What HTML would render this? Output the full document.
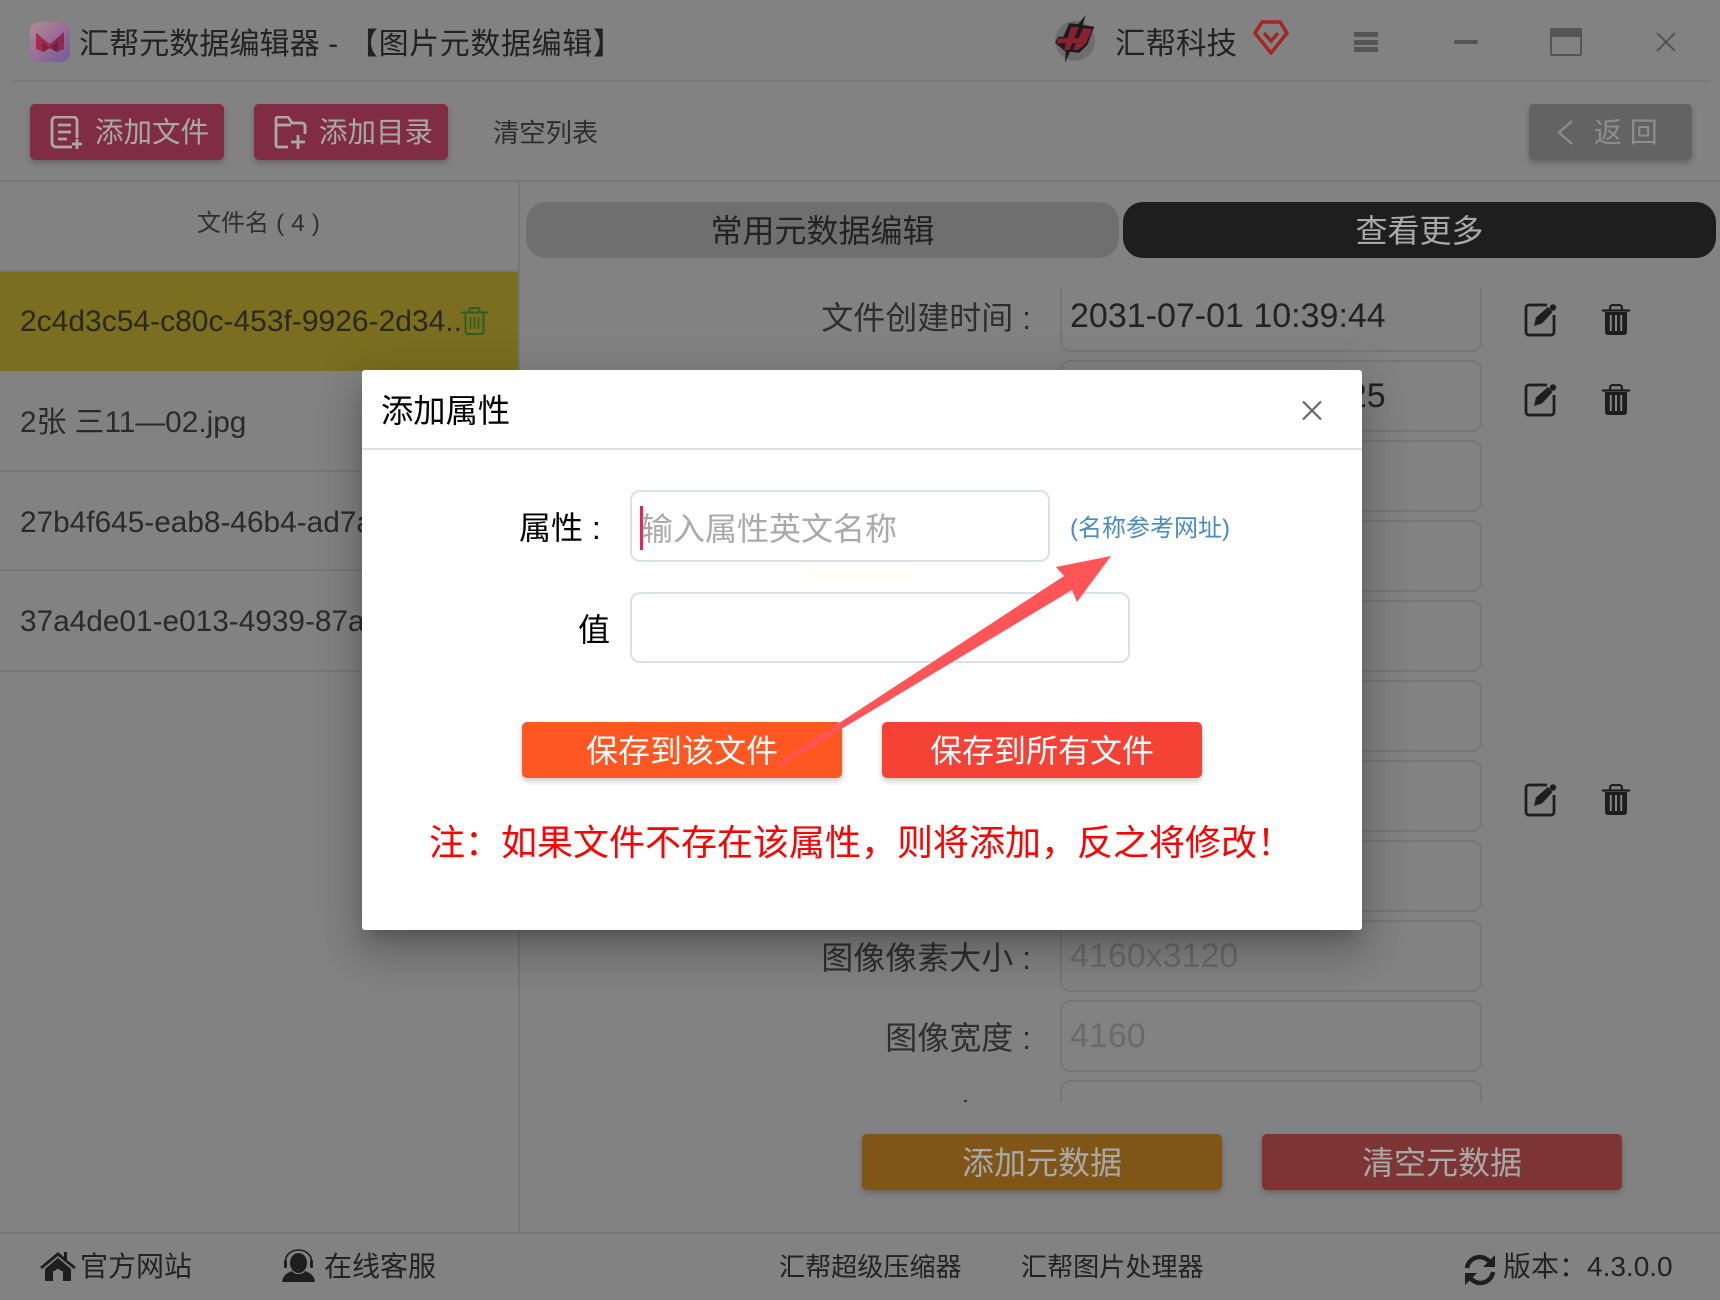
<!DOCTYPE html>
<html lang="zh-CN"><head><meta charset="utf-8"><title>汇帮元数据编辑器</title>
<style>
*{box-sizing:border-box;margin:0;padding:0}
html,body{width:1720px;height:1300px;overflow:hidden;background:#828282}
body{position:relative;font-family:"Liberation Sans","Noto Sans CJK SC",sans-serif;color:#222}
.a,.t{position:absolute}
.t{white-space:pre}
.line{position:absolute;background:#767676}
.btn{position:absolute;border-radius:5px;box-shadow:0 3px 6px rgba(0,0,0,.22)}
.row{position:absolute;left:0;width:518px;height:100px;border-bottom:2px solid #767676;padding-left:20px;font-size:30px;line-height:102px;color:#2a2a2a;white-space:nowrap;overflow:hidden}
.inp{position:absolute;left:533px;width:422px;height:72px;border:2px solid #767676;border-radius:10px;font-size:34px;line-height:68px;padding-left:7px;color:#222}
.lab{position:absolute;left:200px;width:304px;text-align:right;font-size:32px;line-height:76px;color:#2e2e2e;white-space:pre}
.mi{position:absolute;border:2px solid #dcdfe6;border-radius:10px;background:#fff}
</style></head><body>

<!-- title bar -->
<svg class="a" style="left:30px;top:22px" width="40" height="40" viewBox="0 0 40 40">
<defs><linearGradient id="g" x1="0" y1="0" x2="1" y2="1"><stop offset="0" stop-color="#b08c8c"/><stop offset=".5" stop-color="#9a6d98"/><stop offset="1" stop-color="#6f5c98"/></linearGradient></defs>
<rect width="40" height="40" rx="9" fill="url(#g)"/>
<path d="M6 11 L20 22 L20 26 L13 30 L6 27Z" fill="#a52a50"/><path d="M34 10 L20 22 L20 26 L27 30 L34 27Z" fill="#8c2a52"/><path d="M12 19 L20 26 L13 30Z" fill="#7c2244"/><path d="M28 19 L20 26 L27 30Z" fill="#701f44"/></svg>
<div class="t" style="left:79px;top:22px;font-size:30.100px;line-height:46px;color:#222">汇帮元数据编辑器 -</div>
<div class="t" style="left:348px;top:22px;font-size:30px;line-height:46px;color:#222;letter-spacing:.6px">【图片元数据编辑】</div>

<svg class="a" style="left:1053px;top:13px" width="46" height="52" viewBox="0 0 46 52">
<circle cx="22" cy="27.700" r="20" fill="#6d6d6d"/>
<path d="M32.700 2 L29.700 12 L41.300 13.700 L34.300 32 L26.300 39.700 L17 38.700 L12 49.700 L12.700 38.700 L2 29.700 L5.300 23.700 L10.300 23.700 L16.300 10.300 L25.300 11Z" fill="#1c1c1c"/>
<path d="M18 14 H26 L16.300 37 H11Z" fill="#8a2032"/><path d="M30.300 15.300 L39.700 16 L33 30 L25.300 37 H19.700Z" fill="#8a2032"/><path d="M5.300 25.300 H34.300 L32 30.300 H3.700Z" fill="#8a2032"/></svg>
<div class="t" style="left:1115px;top:21px;font-size:30.500px;line-height:46px;color:#222">汇帮科技</div>
<svg class="a" style="left:1253px;top:20px" width="36" height="35" viewBox="0 0 36 35"><path d="M9 2 H27 L34 13 L18 33 L2 13Z" fill="none" stroke="#a32626" stroke-width="3.500" stroke-linejoin="round"/><path d="M11 13 L18 21 L25 13" fill="none" stroke="#a32626" stroke-width="3.500"/></svg>

<div class="a" style="left:1354px;top:32px;width:24px;height:5px;background:#555"></div>
<div class="a" style="left:1354px;top:40px;width:24px;height:5px;background:#555"></div>
<div class="a" style="left:1354px;top:47px;width:24px;height:5px;background:#555"></div>
<div class="a" style="left:1454px;top:40px;width:24px;height:4px;border-radius:2px;background:#555"></div>
<div class="a" style="left:1550px;top:28px;width:32px;height:28px;border:2px solid #555;border-top:9px solid #555;border-radius:2px"></div>
<svg class="a" style="left:1655px;top:32px" width="22" height="20" viewBox="0 0 22 20"><path d="M2 1 L20 19 M20 1 L2 19" stroke="#555" stroke-width="2.200"/></svg>

<div class="line" style="left:12px;top:80px;width:1698px;height:2px;background:#787878"></div>

<!-- toolbar -->
<div class="btn" style="left:30px;top:104px;width:194px;height:56px;background:#802c44"></div>
<svg class="a" style="left:50px;top:116px" width="33" height="33" viewBox="0 0 33 33" fill="none" stroke="#a9a9a9" stroke-width="2.800"><path d="M22 31 H6 a4 4 0 0 1-4-4 V5 a4 4 0 0 1 4-4 H23 a4 4 0 0 1 4 4 V22"/><path d="M8 9 H21 M8 16 H21 M8 23 H17"/><path d="M22 28 H32 M27 23 V33"/></svg>
<div class="t" style="left:95px;top:110px;font-size:28.500px;line-height:46px;color:#a9a9a9">添加文件</div>

<div class="btn" style="left:254px;top:104px;width:194px;height:56px;background:#802c44"></div>
<svg class="a" style="left:274px;top:116px" width="33" height="33" viewBox="0 0 33 33" fill="none" stroke="#a9a9a9" stroke-width="2.800"><path d="M14 31 H4 a2 2 0 0 1-2-2 V3 a2 2 0 0 1 2-2 H14 L18 7 H28 a3 3 0 0 1 3 3 V18"/><path d="M2 9 H17"/><path d="M17 26 H31 M24 19 V33"/></svg>
<div class="t" style="left:319px;top:110px;font-size:28.500px;line-height:46px;color:#a9a9a9">添加目录</div>

<div class="t" style="left:493px;top:110px;font-size:26.300px;line-height:46px;color:#2e2e2e">清空列表</div>

<div class="btn" style="left:1529px;top:104px;width:163px;height:56px;background:#636363"></div>
<svg class="a" style="left:1555px;top:119px" width="20" height="27" viewBox="0 0 20 27"><path d="M17 2 L4 13.500 L17 25" fill="none" stroke="#8a8a8a" stroke-width="2.400"/></svg>
<div class="t" style="left:1594px;top:110px;font-size:28px;line-height:46px;color:#8e8e8e">返 回</div>

<div class="line" style="left:0;top:180px;width:1720px;height:2px"></div>
<div class="line" style="left:518px;top:182px;width:2px;height:1050px"></div>

<!-- file list -->
<div class="t" style="left:197px;top:202px;font-size:24px;line-height:44px;color:#2e2e2e;word-spacing:.5px">文件名 ( 4 )</div>
<div class="line" style="left:0;top:270px;width:518px;height:2px"></div>
<div class="row" style="top:272px;background:#7b6e20;height:99px;color:#2a2a1c;border:none;line-height:100px">2c4d3c54-c80c-453f-9926-2d34..</div>
<svg class="a" style="left:461px;top:307px" width="27" height="28" viewBox="0 0 27 28" fill="none" stroke="#2c5e22" stroke-width="2"><path d="M0 5.500 H27 M8.500 5 V2.500 a1.500 1.500 0 0 1 1.500-1.500 H17 a1.500 1.500 0 0 1 1.500 1.500 V5"/><path d="M4.500 6 V24 a3 3 0 0 0 3 3 H19.500 a3 3 0 0 0 3-3 V6"/><path d="M9.500 10 V22 M13.500 10 V22 M17.500 10 V22" stroke-width="1.600"/></svg>
<div class="row" style="top:371px;height:101px;line-height:104px;font-size:29.800px">2张 三11—02.jpg</div>
<div class="row" style="top:472px;height:99px;font-size:29.800px">27b4f645-eab8-46b4-ad7a-9c01..</div>
<div class="row" style="top:571px;height:101px;font-size:29.800px">37a4de01-e013-4939-87a2-6b1c..</div>

<!-- tabs -->
<div class="a" style="left:526px;top:202px;width:593px;height:56px;border-radius:20px;background:#6f6f6f;text-align:center;font-size:32px;line-height:58px;color:#222">常用元数据编辑</div>
<div class="a" style="left:1123px;top:202px;width:593px;height:56px;border-radius:20px;background:#1e1e1e;text-align:center;font-size:32px;line-height:58px;color:#a9a9a9">查看更多</div>

<!-- form rows -->
<div class="a" style="left:527px;top:288px;width:1193px;height:814px;overflow:hidden">
 <div class="lab" style="top:-8px">文件创建时间 :</div>
 <div class="inp" style="top:-8px;padding-left:8px">2031-07-01 10:39:44</div>
 <div class="inp" style="top:72px;padding-left:8px">2031-07-01 10:39:25</div>
 <div class="inp" style="top:152px"></div>
 <div class="inp" style="top:232px"></div>
 <div class="inp" style="top:312px"></div>
 <div class="inp" style="top:392px"></div>
 <div class="inp" style="top:472px"></div>
 <div class="inp" style="top:552px"></div>
 <div class="lab" style="top:632px">图像像素大小 :</div>
 <div class="inp" style="top:632px;color:#6a6a6a;padding-left:8px">4160x3120</div>
 <div class="lab" style="top:712px">图像宽度 :</div>
 <div class="inp" style="top:712px;color:#6a6a6a;padding-left:8px">4160</div>
 <div class="inp" style="top:792px"></div>
 <div class="a" style="left:437px;top:812px;width:3px;height:2px;background:#333"></div>
</div>

<!-- edit / delete icons -->
<svg class="a" style="left:1524px;top:303px" width="34" height="34" viewBox="0 0 34 34"><path d="M23 2 H5 a3 3 0 0 0-3 3 V29 a3 3 0 0 0 3 3 H27 a3 3 0 0 0 3-3 V12" fill="none" stroke="#1e1e1e" stroke-width="2.800"/><path d="M10 23 L12 14.500 L24 4 L28.500 9 L18 20.500Z" fill="#1e1e1e"/><circle cx="29" cy="4.500" r="3.200" fill="#1e1e1e"/></svg>
<svg class="a" style="left:1524px;top:383px" width="34" height="34" viewBox="0 0 34 34"><path d="M23 2 H5 a3 3 0 0 0-3 3 V29 a3 3 0 0 0 3 3 H27 a3 3 0 0 0 3-3 V12" fill="none" stroke="#1e1e1e" stroke-width="2.800"/><path d="M10 23 L12 14.500 L24 4 L28.500 9 L18 20.500Z" fill="#1e1e1e"/><circle cx="29" cy="4.500" r="3.200" fill="#1e1e1e"/></svg>
<svg class="a" style="left:1524px;top:783px" width="34" height="34" viewBox="0 0 34 34"><path d="M23 2 H5 a3 3 0 0 0-3 3 V29 a3 3 0 0 0 3 3 H27 a3 3 0 0 0 3-3 V12" fill="none" stroke="#1e1e1e" stroke-width="2.800"/><path d="M10 23 L12 14.500 L24 4 L28.500 9 L18 20.500Z" fill="#1e1e1e"/><circle cx="29" cy="4.500" r="3.200" fill="#1e1e1e"/></svg>
<svg class="a" style="left:1602px;top:304px" width="28" height="32" viewBox="0 0 28 32"><path d="M0 6.500 H28 M8 6 V4 a3 3 0 0 1 3-3 H17 a3 3 0 0 1 3 3 V6" fill="none" stroke="#1e1e1e" stroke-width="2.200"/><path d="M3 8 H25 V28 a3 3 0 0 1-3 3 H6 a3 3 0 0 1-3-3Z" fill="#1e1e1e"/><path d="M8.800 11 V27 M14 11 V27 M19.200 11 V27" stroke="#828282" stroke-width="2"/></svg>
<svg class="a" style="left:1602px;top:384px" width="28" height="32" viewBox="0 0 28 32"><path d="M0 6.500 H28 M8 6 V4 a3 3 0 0 1 3-3 H17 a3 3 0 0 1 3 3 V6" fill="none" stroke="#1e1e1e" stroke-width="2.200"/><path d="M3 8 H25 V28 a3 3 0 0 1-3 3 H6 a3 3 0 0 1-3-3Z" fill="#1e1e1e"/><path d="M8.800 11 V27 M14 11 V27 M19.200 11 V27" stroke="#828282" stroke-width="2"/></svg>
<svg class="a" style="left:1602px;top:784px" width="28" height="32" viewBox="0 0 28 32"><path d="M0 6.500 H28 M8 6 V4 a3 3 0 0 1 3-3 H17 a3 3 0 0 1 3 3 V6" fill="none" stroke="#1e1e1e" stroke-width="2.200"/><path d="M3 8 H25 V28 a3 3 0 0 1-3 3 H6 a3 3 0 0 1-3-3Z" fill="#1e1e1e"/><path d="M8.800 11 V27 M14 11 V27 M19.200 11 V27" stroke="#828282" stroke-width="2"/></svg>

<!-- bottom buttons -->
<div class="btn" style="left:862px;top:1134px;width:360px;height:56px;background:#805618;text-align:center;font-size:32px;line-height:58px;color:#a9a9a9">添加元数据</div>
<div class="btn" style="left:1262px;top:1134px;width:360px;height:56px;background:#7c3534;text-align:center;font-size:32px;line-height:58px;color:#a9a9a9">清空元数据</div>

<!-- footer -->
<div class="line" style="left:0;top:1232px;width:1720px;height:2px"></div>
<svg class="a" style="left:40px;top:1250px" width="36" height="32" viewBox="0 0 36 32"><path d="M0 17 L18 2 L24 7 V2 H27 V10 L36 17 L34 19 L18 6 L2 19Z" fill="#1e1e1e"/><path d="M5 19 L18 8 L31 19 V31 H23 V21 H13 V31 H5Z" fill="#1e1e1e"/><path d="M15 22 a3 3 0 0 1 6 0 V31 H15Z" fill="#828282"/></svg>
<div class="t" style="left:80px;top:1245px;font-size:28px;line-height:44px;color:#222">官方网站</div>
<svg class="a" style="left:282px;top:1249px" width="33" height="34" viewBox="0 0 33 34"><ellipse cx="16.500" cy="14" rx="8.500" ry="10" fill="#1e1e1e"/><path d="M3.500 15 V12 a13 11 0 0 1 26 0 V15" fill="none" stroke="#1e1e1e" stroke-width="1.600"/><rect x="2" y="11" width="3" height="8" rx="1.500" fill="#1e1e1e"/><rect x="28" y="11" width="3" height="8" rx="1.500" fill="#1e1e1e"/><path d="M0 33 C1 26 5 24 10 22 C12 26 21 26 23 22 C28 24 32 26 33 33Z" fill="#1e1e1e"/></svg>
<div class="t" style="left:324px;top:1245px;font-size:28px;line-height:44px;color:#222">在线客服</div>
<div class="t" style="left:779px;top:1245px;font-size:26.100px;line-height:44px;color:#222">汇帮超级压缩器</div>
<div class="t" style="left:1021px;top:1245px;font-size:26.100px;line-height:44px;color:#222">汇帮图片处理器</div>
<svg class="a" style="left:1464px;top:1254px" width="32" height="32" viewBox="0 0 32 32"><path d="M3 14 C4 7 10 3 16 3 C20 3 23 5 26 8" fill="none" stroke="#1e1e1e" stroke-width="4.500"/><path d="M31 1 V13 H19Z" fill="#1e1e1e"/><path d="M29 18 C28 25 22 29 16 29 C12 29 9 27 6 24" fill="none" stroke="#1e1e1e" stroke-width="4.500"/><path d="M1 31 V19 H13Z" fill="#1e1e1e"/></svg>
<div class="t" style="left:1503px;top:1245px;font-size:28px;line-height:44px;color:#222">版本：4.3.0.0</div>

<!-- modal -->
<div class="a" style="left:362px;top:370px;width:1000px;height:560px;background:#fff;border-radius:3px;box-shadow:0 24px 38px 3px rgba(0,0,0,.14),0 9px 46px 8px rgba(0,0,0,.12),0 11px 15px -7px rgba(0,0,0,.2)"></div>
<div class="t" style="left:381px;top:388px;font-size:32.300px;line-height:46px;color:#000">添加属性</div>
<svg class="a" style="left:1301px;top:400px" width="22" height="21" viewBox="0 0 22 21"><path d="M2 1.500 L20 19.500 M20 1.500 L2 19.500" stroke="#666" stroke-width="2.200"/></svg>
<div class="a" style="left:362px;top:448px;width:1000px;height:2px;background:#dfdfdf"></div>

<div class="a" style="left:811px;top:552px;width:100px;height:30px;background:#fffffa"></div>

<div class="t" style="left:519px;top:504px;font-size:32px;line-height:48px;color:#000">属性 :</div>
<div class="mi" style="left:630px;top:490px;width:420px;height:72px"></div>
<div class="a" style="left:640px;top:506px;width:3px;height:44px;background:#e91e63"></div>
<div class="t" style="left:641px;top:505px;font-size:32px;line-height:48px;color:#a9a9a9">输入属性英文名称</div>
<div class="t" style="left:1070px;top:507px;font-size:24px;line-height:44px;color:#4a8bc4">(名称参考网址)</div>

<div class="t" style="left:578px;top:606px;font-size:32px;line-height:48px;color:#000">值</div>
<div class="mi" style="left:630px;top:592px;width:500px;height:71px"></div>

<div class="btn" style="left:522px;top:722px;width:320px;height:56px;background:#ff5722;text-align:center;font-size:32px;line-height:58px;color:#fff">保存到该文件</div>
<div class="btn" style="left:882px;top:722px;width:320px;height:56px;background:#f44336;text-align:center;font-size:32px;line-height:58px;color:#fff">保存到所有文件</div>

<svg class="a" style="left:362px;top:370px;pointer-events:none" width="1000" height="560" viewBox="362 370 1000 560"><polygon points="1111,556 1056,567 1064,576 778,763 780,766 1072,590 1077,602" fill="#ff5558"/></svg>

<div class="t" style="left:429px;top:817px;font-size:36px;line-height:52px;color:#f00">注：如果文件不存在该属性，则将添加，反之将修改！</div>

</body></html>
